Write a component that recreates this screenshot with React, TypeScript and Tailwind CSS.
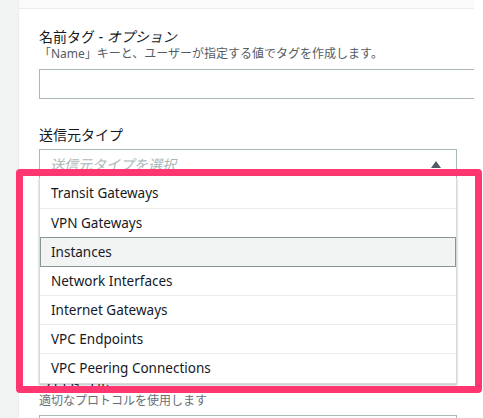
const font = "font-['Noto_Sans','Noto_Sans_CJK_JP',sans-serif]";

const options = [
  "Transit Gateways",
  "VPN Gateways",
  "Instances",
  "Network Interfaces",
  "Internet Gateways",
  "VPC Endpoints",
  "VPC Peering Connections",
];

export default function App() {
  return (
    <div className={`relative flex h-[418px] w-[483px] overflow-hidden bg-white ${font}`}>
      {/* side navigation strip */}
      <div className="w-[19px] shrink-0 border-r border-[#eaeded] bg-[#f2f3f3]" />

      {/* form panel */}
      <div className="w-[455px] shrink-0 overflow-hidden">
        <div className="h-[9px] border-b border-[#eaeded] bg-[#fafafa]" />

        <div className="pl-[20px] pt-[19px]">
          <label className="block text-[14px] leading-[18px] text-[#16191f]">
            名前タグ <i>- オプション</i>
          </label>
          <p className="text-[12px] leading-[16px] text-[#545b64]">
            「Name」キーと、ユーザーが指定する値でタグを作成します。
          </p>
          <div className="mt-[7px] h-[30px] w-[460px] border border-[#aab7b8] bg-white" />

          <label className="mt-[27px] block text-[14px] leading-[18px] text-[#16191f]">
            送信元タイプ
          </label>
          <div className="relative mt-[5px] w-[418px]">
            <div className="flex h-[30px] items-center justify-between border border-[#aab7b8] bg-white pl-[10px] pr-[15px]">
              <span className="text-[14px] italic text-[#aab7b8]">送信元タイプを選択</span>
              <svg width="10" height="7" viewBox="0 0 10 7" className="mt-[1px]">
                <path d="M0 7 L5 0 L10 7 Z" fill="#545b64" />
              </svg>
            </div>

            {/* open dropdown */}
            <ul className="absolute left-0 right-0 top-[29px] z-10 border border-t-0 border-[#d5dbdb] bg-white text-[13.5px] text-[#16191f] shadow-[0_1px_2px_rgba(0,28,36,0.3)]">
              {options.map((o, i) => {
                if (o === "Instances") {
                  return (
                    <li
                      key={o}
                      className="-mt-px flex h-[30px] items-center border border-[#879596] bg-[#f2f3f3] pl-[10px]"
                    >
                      {o}
                    </li>
                  );
                }
                const sep = i < options.length - 1 && options[i + 1] !== "Instances";
                return (
                  <li
                    key={o}
                    className={`flex items-center pl-[11px] ${i === 0 ? "h-[31px]" : "h-[29px]"} ${
                      sep ? "border-b border-[#eaeded]" : ""
                    }`}
                  >
                    {o}
                  </li>
                );
              })}
            </ul>
          </div>

          <label className="mt-[196px] block text-[14px] leading-[18px] text-[#16191f]">
            プロトコル
          </label>
          <p className="text-[12px] leading-[16px] text-[#687078]">適切なプロトコルを使用します</p>
          <div className="mt-[6px] h-[30px] w-[418px] border border-[#aab7b8] bg-white" />
        </div>
      </div>

      {/* annotation frame */}
      <div className="pointer-events-none absolute left-[16px] top-[169px] z-20 h-[224px] w-[466px] rounded-[4px] border-[7px] border-[#ff3670]" />
    </div>
  );
}
